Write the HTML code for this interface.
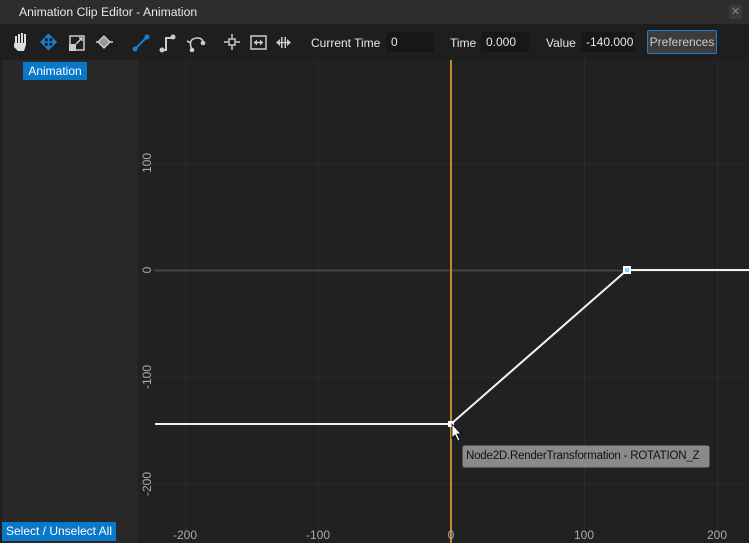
<!DOCTYPE html>
<html><head><style>
*{margin:0;padding:0;box-sizing:border-box}
body{width:749px;height:543px;overflow:hidden;background:#1e1e1e;font-family:"Liberation Sans",sans-serif;position:relative;color:#ddd}
.a{position:absolute}
.t{font-size:12px;color:#e8e8e8;white-space:nowrap}
.inp{position:absolute;top:32px;height:20px;background:#171717;border-radius:2px;font-size:12px;color:#e8e8e8;padding:3px 0 0 5px}
</style></head><body>
<div class="a" style="left:0;top:0;width:749px;height:24px;background:#2d2d2d"></div>
<div class="a t" style="left:19px;top:5px;font-size:12.2px">Animation Clip Editor - Animation</div>
<div class="a" style="left:729px;top:5px;width:13px;height:14px;background:#3a3a3a;color:#888;font-size:11px;text-align:center;line-height:14px">✕</div>

<svg class="a" style="left:0;top:24px" width="300" height="36">
<g fill="#ddd"><path d="M15 20v-8h2v7h1v-9h2v9h1v-10h2v10h1v-9h2v11l-2 6h-6l-4-4v-5z"/></g>
<g stroke="#1a7fd0" stroke-width="1.5" fill="#1a7fd0"><path d="M41 18h15M48.5 10.5v15" /><path d="M41 18l3-3v6z M56 18l-3-3v6z M48.5 10.5l-3 3h6z M48.5 25.5l-3-3h6z"/></g>
<g><rect x="70" y="12" width="14" height="14" fill="none" stroke="#ccc" stroke-width="1.5"/><rect x="69" y="20" width="7" height="7" fill="#ccc"/><path d="M76 20l6-6M79 14h3v3" stroke="#ccc" stroke-width="1.5" fill="none"/></g>
<g><path d="M104 12l6 6-6 6-6-6z" fill="#999" stroke="#ddd" stroke-width="1.2"/><path d="M96 18h2M110 18h3" stroke="#ccc" stroke-width="1.5"/></g>
<g stroke="#1a7fd0" fill="#1a7fd0"><path d="M135 25l12-12" stroke-width="2"/><circle cx="135" cy="25" r="2"/><circle cx="147" cy="13" r="2"/></g>
<g stroke="#ccc" fill="#ccc"><path d="M162 26h4v-12h6" stroke-width="2" fill="none"/><circle cx="162" cy="26" r="2"/><circle cx="173" cy="13" r="2"/></g>
<g stroke="#ccc" fill="none" stroke-width="1.6"><path d="M192 26q-5-12 6-12q4 0 5 4"/><circle cx="192" cy="26" r="1.5" fill="#ccc"/><circle cx="203" cy="19" r="1.5" fill="#ccc"/><path d="M187 17l4 2"/></g>
<g stroke="#ccc" stroke-width="1.5" fill="none"><rect x="229" y="15" width="6" height="6"/><path d="M232 10v4M232 22v4M224 18h4M236 18h4"/></g>
<g stroke="#ccc" stroke-width="1.5" fill="none"><rect x="251" y="12" width="15" height="13"/><path d="M254 18.5h9"/></g><path d="M254 18.5l3-3v6zM263 18.5l-3-3v6z" fill="#ccc"/>
<g fill="#ccc"><path d="M276 18.5l4-3.5v7zM291 18.5l-4-3.5v7z"/><rect x="281" y="13" width="1.5" height="11"/><rect x="284.5" y="13" width="1.5" height="11"/><rect x="279" y="18" width="9" height="1.2"/></g>
</svg>

<div class="a t" style="left:311px;top:36px">Current Time</div>
<div class="inp" style="left:386px;width:48px">0</div>
<div class="a t" style="left:450px;top:36px">Time</div>
<div class="inp" style="left:481px;width:48px">0.000</div>
<div class="a t" style="left:546px;top:36px">Value</div>
<div class="inp" style="left:581px;width:54px">-140.000</div>
<div class="a" style="left:647px;top:30px;width:70px;height:24px;background:#3c3c3c;border:1px solid #1a7fd0;border-radius:2px;font-size:12px;color:#ccc;text-align:center;line-height:22px;white-space:nowrap">Preferences</div>

<div class="a" style="left:0;top:60px;width:138px;height:483px;background:#282828;border-left:2px solid #1f1f1f"></div>
<div class="a" style="left:23px;top:62px;width:64px;height:18px;background:#0a78c8;color:#fff;font-size:12px;text-align:center;line-height:18px">Animation</div>
<div class="a" style="left:2px;top:522px;width:114px;height:19px;background:#0a78c8;color:#fff;font-size:12px;text-align:center;line-height:19px;white-space:nowrap">Select / Unselect All</div>

<svg class="a" style="left:138px;top:60px" width="611" height="483">
<rect width="611" height="483" fill="#212121"/>
<g stroke="#2b2b2b" stroke-width="1">
<path d="M47.5 0v483M180.5 0v483M446.5 0v483M579.5 0v483"/>
<path d="M0 103.5h611M0 317.5h611M0 424.5h611"/>
</g>
<path d="M16 210.5h595" stroke="#454545" stroke-width="2"/>
<path d="M313 0v483" stroke="#c08a2e" stroke-width="2"/>
<path d="M17 364H313L489 210H611" stroke="#f2f2f2" stroke-width="2" fill="none"/>
<rect x="485" y="206" width="8" height="8" fill="#fff"/><rect x="487" y="208" width="4" height="4" fill="#7fd8f6"/>
<rect x="310" y="361" width="6" height="6" fill="#fff"/>
<path d="M314 364v14l3-3 3 6 2-1-3-6h4z" fill="#fff" stroke="#000" stroke-width="0.8"/>
<g fill="#aaa" font-size="12" font-family="Liberation Sans" text-anchor="middle">
<text x="47" y="479">-200</text><text x="180" y="479">-100</text><text x="313" y="479">0</text><text x="446" y="479">100</text><text x="579" y="479">200</text>
<text transform="translate(13,103) rotate(-90)">100</text>
<text transform="translate(13,210) rotate(-90)">0</text>
<text transform="translate(13,317) rotate(-90)">-100</text>
<text transform="translate(13,424) rotate(-90)">-200</text>
</g>
</svg>
<div class="a" style="left:462px;top:445px;width:248px;height:23px;background:#8a8a8a;border:1px solid #555;border-radius:3px;color:#111;font-size:11.5px;letter-spacing:-0.2px;line-height:21px;padding-left:3px;white-space:nowrap;overflow:hidden">Node2D.RenderTransformation - ROTATION_Z</div>
</body></html>
